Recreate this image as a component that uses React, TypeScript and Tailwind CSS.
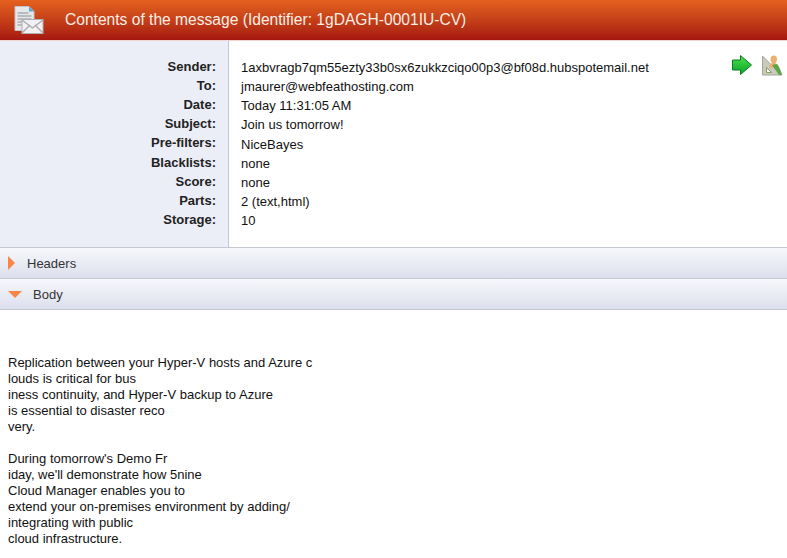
import React from "react";

const fields = [
  ["Sender:", "1axbvragb7qm55ezty33b0sx6zukkzciqo00p3@bf08d.hubspotemail.net"],
  ["To:", "jmaurer@webfeathosting.com"],
  ["Date:", "Today 11:31:05 AM"],
  ["Subject:", "Join us tomorrow!"],
  ["Pre-filters:", "NiceBayes"],
  ["Blacklists:", "none"],
  ["Score:", "none"],
  ["Parts:", "2 (text,html)"],
  ["Storage:", "10"],
];

const bodyLines = [
  "Replication between your Hyper-V hosts and Azure c",
  "louds is critical for bus",
  "iness continuity, and Hyper-V backup to Azure",
  "is essential to disaster reco",
  "very.",
  "",
  "During tomorrow's Demo Fr",
  "iday, we'll demonstrate how 5nine",
  "Cloud Manager enables you to",
  "extend your on-premises environment by adding/",
  "integrating with public",
  "cloud infrastructure.",
];

function MessageIcon() {
  return (
    <svg width="30" height="28" viewBox="0 0 30 28" className="shrink-0">
      <path d="M1 .5h14l5 5v19H1z" fill="#e6e7ea" stroke="#c4c4c8" />
      <path d="M15 .5l5 5h-5z" fill="#5aa7d8" />
      <path d="M3.500 7h11M3.500 10h14M3.500 13h14M3.500 16h6M3.500 19h5" stroke="#a9adb3" strokeWidth="1.5" />
      <rect x="8" y="13.500" width="21" height="14" fill="#f1f1f3" stroke="#b0b0b4" />
      <path d="M8 14l10.500 8L29 14M8 27l8-8M29 27l-8-8" fill="none" stroke="#a9a9ae" strokeWidth="1.3" />
    </svg>
  );
}

function ArrowIcon() {
  return (
    <svg width="20" height="20" viewBox="0 0 20 20">
      <defs>
        <linearGradient id="arrow-fill" x1="0" y1="0" x2="0" y2="1">
          <stop offset="0" stopColor="#4fe04f" />
          <stop offset="1" stopColor="#07a528" />
        </linearGradient>
      </defs>
      <path d="M.5 5h8V.5L19.500 10 8.500 19.500V15h-8z" fill="url(#arrow-fill)" stroke="#0b7a22" />
    </svg>
  );
}

function WhitelistIcon() {
  return (
    <svg width="21" height="21" viewBox="0 0 21 21">
      <path d="M.5 1l19 19H.5z" fill="#cbc8bc" stroke="#a5a59b" />
      <path d="M4.500 12.500l5 5h-5z" fill="#fff" stroke="#8aa05e" />
      <path d="M7 13c0-3 2-4 3-5-1-1-1.500-2.500-1.500-4 0-2 1.300-3.500 3.300-3.500S15 2 15 4c0 1.500-.6 3-1.500 4l2 4z" fill="#eeb070" />
      <path d="M10 10l5-1c2 2 3 5 5.500 11H17z" fill="#5da548" />
    </svg>
  );
}

function SectionBar({ label, open }: { label: string; open?: boolean }) {
  return (
    <div className="flex h-[31px] items-center border-b border-[#c4c8d0] bg-gradient-to-b from-[#f7f8fc] to-[#dcdfec] text-[13px] text-[#333333]">
      {open ? (
        <div className="ml-2 h-0 w-0 border-x-[7px] border-t-[7px] border-x-transparent border-t-[#fa8545]" />
      ) : (
        <div className="ml-2 h-0 w-0 border-y-[7px] border-l-[7px] border-y-transparent border-l-[#fa8545]" />
      )}
      <span className={open ? "ml-[11px] pt-px" : "ml-3 pt-px"}>{label}</span>
    </div>
  );
}

export default function App() {
  return (
    <div className="h-[558px] w-[787px] overflow-hidden bg-white font-['Liberation_Sans',Arial,sans-serif] text-[13px] text-black">
      {/* Title bar */}
      <div className="flex h-[41px] items-center border-b border-[#f0d5d0] bg-gradient-to-b from-[#e4611f] to-[#a61611] pl-[14px]">
        <MessageIcon />
        <h1 className="ml-[21px] text-[15.6px] font-normal text-[#fbeee6]">
          Contents of the message (Identifier: 1gDAGH-0001IU-CV)
        </h1>
      </div>

      {/* Message details */}
      <div className="flex h-[206px]">
        <div className="w-[229px] shrink-0 border-r border-[#c4c8d0] bg-[#eceef7] pr-3 pt-[15.6px]">
          {fields.map(([label]) => (
            <div key={label} className="h-[19.2px] text-right font-bold leading-[19px] text-[#222222]">
              {label}
            </div>
          ))}
        </div>
        <div className="relative flex-1 pl-3 pt-[16.8px]">
          {fields.map(([label, value]) => (
            <div key={label} className="h-[19.2px] leading-[19px] text-[#111111]">
              {value}
            </div>
          ))}
          <div className="absolute left-[503px] top-[14px] flex items-start gap-[10px]">
            <ArrowIcon />
            <WhitelistIcon />
          </div>
        </div>
      </div>

      <div className="border-t border-[#c4c8d0]">
        <SectionBar label="Headers" />
        <SectionBar label="Body" open />
      </div>

      {/* Message body */}
      <div className="pl-2 pt-[45px] leading-[16px] text-[#111111]">
        {bodyLines.map((line, i) => (
          <div key={i} className="h-[16px]">
            {line}
          </div>
        ))}
      </div>
    </div>
  );
}
